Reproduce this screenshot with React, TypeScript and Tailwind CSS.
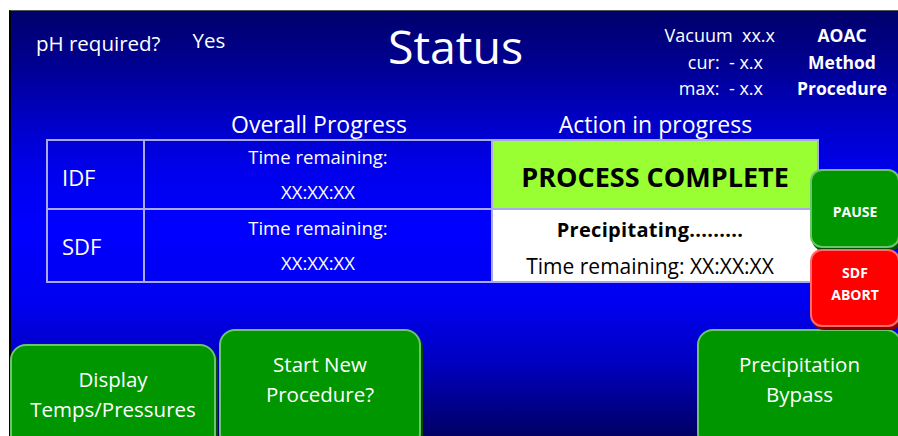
import React from "react";

const font = { fontFamily: '"Open Sans", "Liberation Sans", sans-serif' };

function GreenButton({ className, children }: { className: string; children: React.ReactNode }) {
  return (
    <div
      className={`flex flex-col items-center rounded-[16px] border-2 border-[#6cc46c] bg-[#009600] text-white shadow-[2px_3px_0_#004d00] ${className}`}
    >
      {children}
    </div>
  );
}

export default function App() {
  return (
    <div className="h-[436px] w-[898px] overflow-hidden bg-white pt-[10px]" style={font}>
      <div className="relative ml-[9px] flex h-[430px] flex-col border-l-2 border-t border-l-black border-t-[#555555] bg-[linear-gradient(180deg,#00006c_0%,#000090_12%,#0000c8_26%,#0000ee_38%,#0000ff_50%,#0000f0_68%,#0000c0_82%,#000060_100%)] text-white">
        {/* header */}
        <div className="grid h-[95px] grid-cols-[1fr_auto_1fr]">
          <div className="flex items-start pl-[25px] pt-[17px] text-[20.5px]">
            <span>pH required?</span>
            <span className="ml-[32px] -mt-[3px]">Yes</span>
          </div>
          <div className="pl-[2px] pt-[3px] text-[46.5px] leading-[64px]">Status</div>
          <div className="flex justify-end">
            <div className="mr-[123px] mt-[11px] flex flex-col items-end text-[18px] leading-[26.5px]">
              <span>Vacuum&nbsp;&nbsp;xx.x</span>
              <span className="mr-[12px]">cur:&nbsp;&nbsp;- x.x</span>
              <span className="mr-[12px]">max:&nbsp;&nbsp;- x.x</span>
            </div>
            <div className="absolute right-[11px] top-[11px] flex flex-col items-center text-[17.5px] font-bold leading-[26.5px]">
              <span>AOAC</span>
              <span>Method</span>
              <span>Procedure</span>
            </div>
          </div>
        </div>

        {/* column titles */}
        <div className="ml-[35px] flex h-[37px] pt-[5px] text-[23px] leading-[34px]">
          <div className="w-[99px]" />
          <div className="w-[348px] text-center">Overall Progress</div>
          <div className="w-[325px] text-center">Action in progress</div>
        </div>

        {/* table */}
        <div className="ml-[35px] w-[773px] border-2 border-[#a9a9f0]">
          <div className="flex h-[69px] border-b-2 border-[#a9a9f0]">
            <div className="flex w-[97px] items-center border-r-2 border-[#a9a9f0] pl-[14px] pt-[6px] text-[22px]">IDF</div>
            <div className="flex w-[348px] flex-col items-center border-r-2 border-[#a9a9f0] text-[18.5px] leading-[35px]">
              <span className="-mt-[2px]">Time remaining:</span>
              <span>XX:XX:XX</span>
            </div>
            <div className="flex flex-1 items-center justify-center bg-[#99ff33] pt-[6px] text-[27px] font-bold text-black">
              PROCESS COMPLETE
            </div>
          </div>
          <div className="flex h-[71px]">
            <div className="flex w-[97px] items-center border-r-2 border-[#a9a9f0] pl-[14px] pt-[3px] text-[22px]">SDF</div>
            <div className="flex w-[348px] flex-col items-center border-r-2 border-[#a9a9f0] text-[18.5px] leading-[35px]">
              <span>Time remaining:</span>
              <span>XX:XX:XX</span>
            </div>
            <div className="flex flex-1 flex-col items-center bg-white pr-[10px] pt-[1px] text-[20px] leading-[37px] text-black">
              <span className="font-bold tracking-[0.3px]">Precipitating.........</span>
              <span className="text-[21px]">Time remaining: XX:XX:XX</span>
            </div>
          </div>
        </div>

        {/* PAUSE / ABORT */}
        <div className="absolute left-[799px] top-[158px] flex h-[79px] w-[90px] items-center justify-center rounded-[12px] border-2 border-[#6cc46c] bg-[#009600] pt-[5px] text-[14px] font-bold shadow-[2px_3px_0_#004d00]">
          PAUSE
        </div>
        <div className="absolute left-[799px] top-[238px] flex h-[78px] w-[90px] flex-col items-center justify-center rounded-[12px] border-2 border-[#ff6b6b] bg-[#ff0000] pb-[9px] text-[14px] font-bold leading-[22px] shadow-[2px_3px_0_#8a0000]">
          <span>SDF</span>
          <span>ABORT</span>
        </div>

        {/* bottom buttons */}
        <div className="mt-[46px] flex items-start">
          <GreenButton className="-ml-[1px] mt-[15px] h-[110px] w-[206px] pt-[18px] text-[20.5px] leading-[30px]">
            <span>Display</span>
            <span>Temps/Pressures</span>
          </GreenButton>
          <GreenButton className="ml-[3px] h-[120px] w-[202px] pt-[18px] text-[20.5px] leading-[30px]">
            <span>Start New</span>
            <span>Procedure?</span>
          </GreenButton>
          <div className="flex-1" />
          <GreenButton className="mr-[-4px] h-[120px] w-[205px] pt-[18px] text-[20.5px] leading-[30px]">
            <span>Precipitation</span>
            <span>Bypass</span>
          </GreenButton>
        </div>
      </div>
    </div>
  );
}
